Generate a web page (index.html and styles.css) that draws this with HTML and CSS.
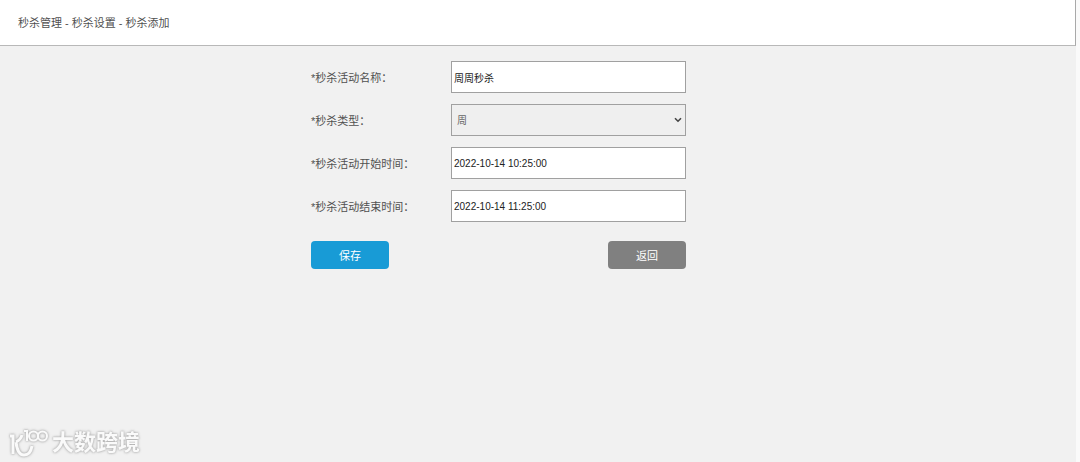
FILE: index.html
```html
<!DOCTYPE html>
<html lang="zh-CN">
<head>
    <meta charset="UTF-8">
    <meta name="viewport" content="width=device-width, initial-scale=1.0">
    <title>秒杀添加</title>
    <link rel="stylesheet" href="styles.css">
</head>
<body>
    <div class="page">
        <div class="header">秒杀管理 - 秒杀设置 - 秒杀添加</div>

        <form class="seckill-form">
            <div class="row">
                <label for="name">*秒杀活动名称：</label>
                <input type="text" id="name" value="周周秒杀">
            </div>
            <div class="row">
                <label for="type">*秒杀类型：</label>
                <div class="select-box">
                    <select id="type">
                        <option>周</option>
                    </select>
                    <svg class="arrow" viewBox="0 0 8 6"><path d="M1 1.2 L4 4.2 L7 1.2" fill="none" stroke="#444" stroke-width="1.6"/></svg>
                </div>
            </div>
            <div class="row">
                <label for="start">*秒杀活动开始时间：</label>
                <input type="text" id="start" value="2022-10-14 10:25:00">
            </div>
            <div class="row">
                <label for="end">*秒杀活动结束时间：</label>
                <input type="text" id="end" value="2022-10-14 11:25:00">
            </div>
            <div class="buttons">
                <button type="button" class="btn save">保存</button>
                <button type="button" class="btn back">返回</button>
            </div>
        </form>

        <!-- Watermark -->
        <div class="watermark">
            <svg class="logo" viewBox="0 0 40 30" fill="none" stroke="#fafafa">
                <path d="M1 8 H4 V26" stroke-width="3"/>
                <path d="M13 7 C12 11 9 13 7 14 M7 14 C8 23 11 27 15 27 C19 27 22 24 23 18" stroke-width="3"/>
                <path d="M15 3 H18 V13" stroke-width="2"/>
                <circle cx="24.500" cy="8" r="4.5" stroke-width="2"/>
                <circle cx="33.500" cy="8" r="4.5" stroke-width="2"/>
            </svg>
            <span>大数跨境</span>
        </div>
    </div>
</body>
</html>
```

FILE: styles.css
```css
* {
    box-sizing: border-box;
}

body {
    margin: 0;
    background-color: #fafafa;
    color: #505050;
    font-family: "Liberation Sans", "Noto Sans CJK SC", sans-serif;
    font-size: 11px;
}

.page {
    display: flex;
    flex-direction: column;
    min-height: 100vh;
    margin-right: 4px;
    background-color: #f1f1f1;
}

.header {
    padding: 15px 18px 14px;
    line-height: 16px;
    background-color: #fff;
    border-right: 1px solid #a9a9a9;
    border-bottom: 1px solid #b8b8b8;
}

.seckill-form {
    display: flex;
    flex-direction: column;
    gap: 11px;
    width: 100%;
    max-width: 686px;
    padding: 15px 0 0 311px;
}

.row {
    display: flex;
    align-items: center;
}

.row label {
    flex: 0 0 140px;
}

.row input,
.row select {
    width: 100%;
    height: 32px;
    border: 1px solid #a0a0a0;
    border-radius: 0;
    font-family: inherit;
    font-size: 10px;
}

.row input {
    flex: 1;
    min-width: 0;
    padding: 0 2px;
    background-color: #fff;
    color: #222;
}

.row select {
    display: block;
    padding: 0 5px;
    appearance: none;
    background-color: #efefef;
    color: #666;
}

.select-box {
    position: relative;
    flex: 1;
}

.arrow {
    position: absolute;
    top: 13px;
    right: 4px;
    width: 8px;
    height: 6px;
    pointer-events: none;
}

.buttons {
    display: flex;
    justify-content: space-between;
    padding-top: 8px;
}

.btn {
    width: 78px;
    height: 28px;
    padding: 0;
    border: none;
    border-radius: 4px;
    color: #fff;
    font-family: inherit;
    font-size: 11px;
    cursor: pointer;
}

.save {
    background-color: #189bd6;
}

.back {
    background-color: #808080;
}

.watermark {
    display: flex;
    align-items: center;
    gap: 3px;
    margin-top: auto;
    padding: 0 0 4px 9px;
    color: #fafafa;
    font-size: 22px;
    font-weight: bold;
    line-height: 28px;
    filter: drop-shadow(0 0 1px #aaa) drop-shadow(0 0 1px #ccc);
}

.logo {
    width: 40px;
    height: 30px;
}
```
